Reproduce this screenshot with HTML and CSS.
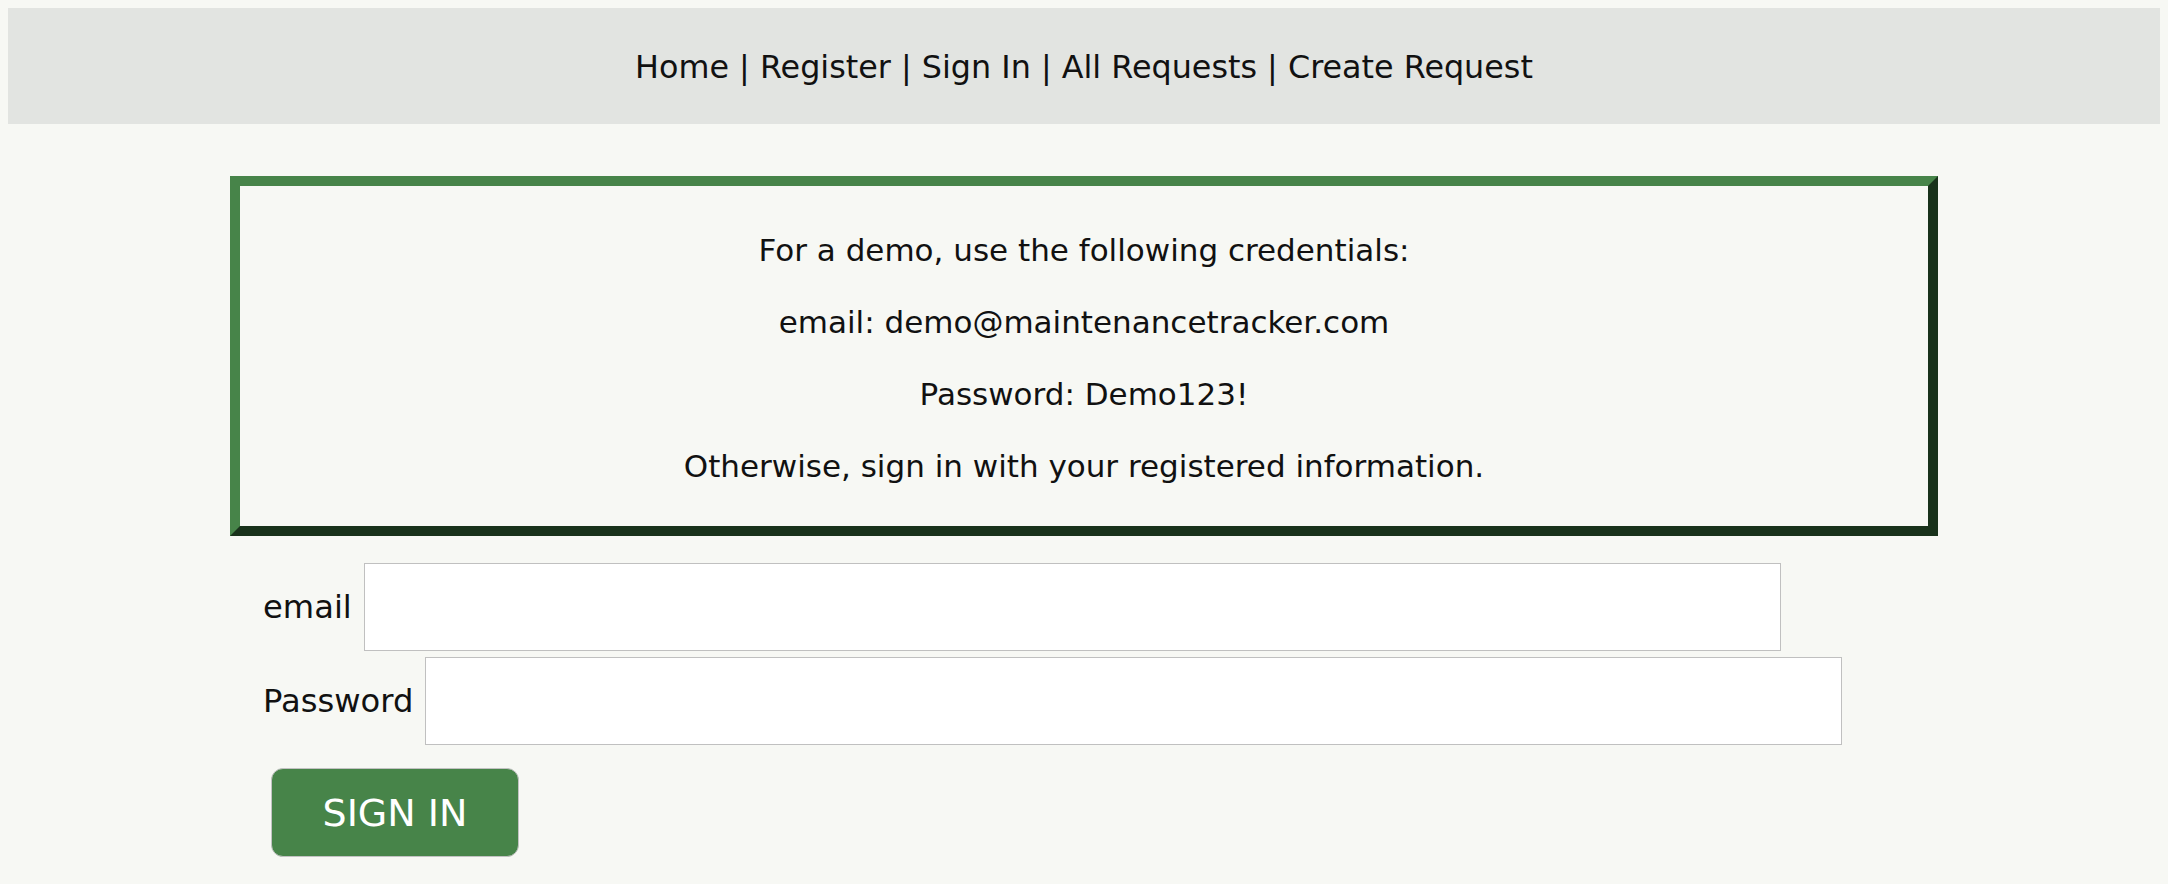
FILE: index.html
```html
<!DOCTYPE html>
<html lang="en">
<head>
<meta charset="utf-8">
<title>Sign In</title>
<link rel="stylesheet" href="styles.css">
</head>
<body>
<nav class="topnav">
  <a href="#">Home</a> | <a href="#">Register</a> | <a href="#">Sign In</a> | <a href="#">All Requests</a> | <a href="#">Create Request</a>
</nav>
<main class="page">
  <section class="notice">
    <p>For a demo, use the following credentials:</p>
    <p>email: demo@maintenancetracker.com</p>
    <p>Password: Demo123!</p>
    <p>Otherwise, sign in with your registered information.</p>
  </section>
  <form class="signin">
    <div class="row">
      <label for="email">email</label>
      <input id="email" type="text">
    </div>
    <div class="row">
      <label for="password">Password</label>
      <input id="password" type="password">
    </div>
    <button type="button" class="btn">SIGN IN</button>
  </form>
</main>
</body>
</html>
```
FILE: styles.css
```css
html, body {
  background: #f7f8f4;
}
body {
  margin: 8px;
  font-family: "DejaVu Sans", "Liberation Sans", sans-serif;
  font-size: 31px;
  color: #111;
}
.topnav {
  margin: 0 -2px;
  background: #e2e4e1;
  padding: 41px 0 39px;
  line-height: 36px;
  font-size: 31.8px;
  text-align: center;
  color: #111;
}
.topnav a {
  color: #111;
  text-decoration: none;
}
.page {
  width: 1708px;
  margin: 52px auto 0;
}
.notice {
  box-sizing: border-box;
  width: 1708px;
  border: 10px solid;
  border-color: #478449 #19321b #19321b #478449;
  padding: 28px 0 24px;
  text-align: center;
}
.notice p {
  margin: 0;
  line-height: 72px;
}
.signin {
  padding: 27px 0 0 33px;
  display: flex;
  flex-direction: column;
  align-items: flex-start;
}
.row {
  display: flex;
  align-items: center;
  gap: 12px;
  margin-bottom: 6px;
}
.row label {
  font-size: 32.2px;
  line-height: 36px;
}
.row input {
  box-sizing: border-box;
  width: 1417px;
  height: 88px;
  margin: 0;
  border: 1px solid #c0c0c0;
  background: #fff;
  font: inherit;
  padding: 0 8px;
}
.btn {
  margin: 17px 0 0 8px;
  box-sizing: border-box;
  width: 248px;
  height: 89px;
  border: 1px solid #c2c2c2;
  border-radius: 12px;
  background: #478449;
  color: #fff;
  font-family: "DejaVu Sans", "Liberation Sans", sans-serif;
  font-size: 38px;
  padding: 0;
  cursor: pointer;
}
```
